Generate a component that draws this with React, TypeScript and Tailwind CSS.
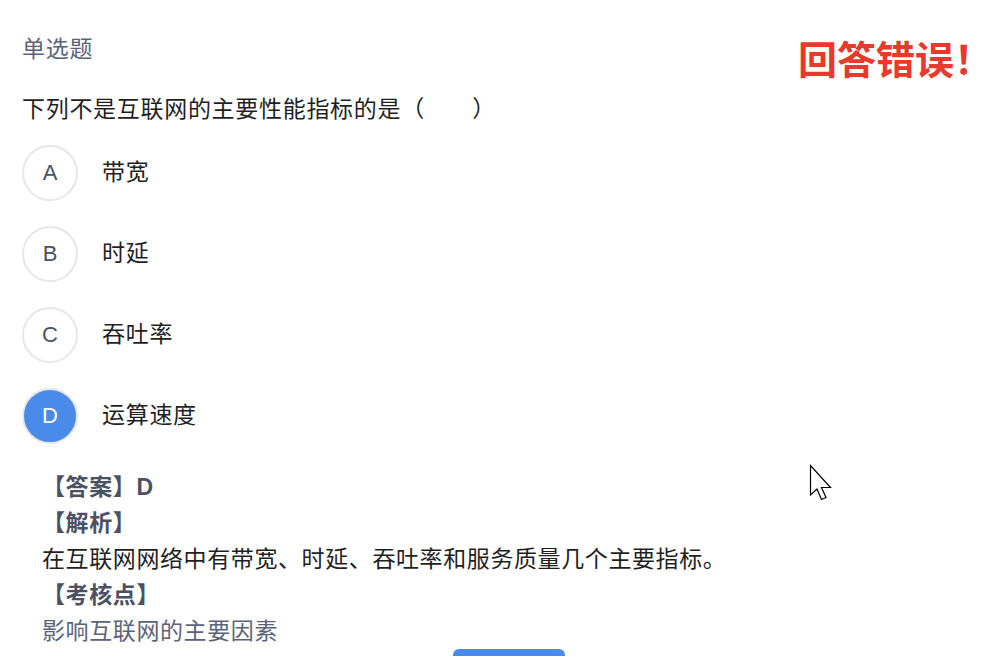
import * as React from 'react';

const options = [
  { key: 'A', label: '带宽' },
  { key: 'B', label: '时延' },
  { key: 'C', label: '吞吐率' },
  { key: 'D', label: '运算速度', selected: true },
];

export default function App() {
  return (
    <div
      className="relative h-[656px] w-[1002px] overflow-hidden bg-white px-[22px]"
      style={{ fontFamily: '"Liberation Sans", "Noto Sans CJK SC", sans-serif' }}
    >
      {/* Header */}
      <div className="flex items-start justify-between pt-[34px]">
        <span className="text-[23px] leading-[30px] tracking-[0.7px] text-[#5c6378]">单选题</span>
        <span className="mr-[-13px] mt-[3px] text-[39px] font-bold leading-[48px] text-[#e8392c]">
          回答错误！
        </span>
      </div>

      {/* Question */}
      <p className="mt-[9px] text-[23px] leading-[30px] tracking-[0.7px] text-[#1f1f1f]">
        下列不是互联网的主要性能指标的是（　　）
      </p>

      {/* Options */}
      <ul className="mt-[8px] flex flex-col">
        {options.map((opt) => (
          <li key={opt.key} className="flex h-[81px] items-center gap-[24px]">
            <span
              className={
                opt.selected
                  ? 'flex h-[56px] w-[56px] items-center justify-center rounded-full border-2 border-[#e6e7ea] bg-[#4a8be9] text-[22px] text-white'
                  : 'flex h-[56px] w-[56px] items-center justify-center rounded-full border-2 border-[#e6e7ea] bg-white text-[22px] text-[#4b5162]'
              }
            >
              {opt.key}
            </span>
            <span className="text-[23px] tracking-[0.7px] text-[#1f1f1f]">{opt.label}</span>
          </li>
        ))}
      </ul>

      {/* Analysis */}
      <div className="mt-[13px] pl-[20px] text-[23px] leading-[36px] tracking-[0.6px]">
        <p className="font-bold text-[#4b5162]">【答案】D</p>
        <p className="font-bold text-[#4b5162]">【解析】</p>
        <p className="text-[#1f1f1f]">在互联网网络中有带宽、时延、吞吐率和服务质量几个主要指标。</p>
        <p className="font-bold text-[#4b5162]">【考核点】</p>
        <p className="text-[#5c6378]">影响互联网的主要因素</p>
      </div>

      <div className="ml-[431px] h-[40px] w-[112px] rounded-[6px] bg-[#4a8be9]" />

      {/* Mouse cursor */}
      <svg
        className="pointer-events-none absolute left-[809px] top-[464px]"
        width="28"
        height="40"
        viewBox="0 0 28 40"
      >
        <path
          d="M1.5 1.5 L1.5 31 L8 25 L12.5 35.5 L17 33.5 L12.5 23.5 L21.5 23.5 Z"
          fill="white"
          stroke="black"
          strokeWidth="1.2"
          strokeLinejoin="miter"
        />
      </svg>
    </div>
  );
}
